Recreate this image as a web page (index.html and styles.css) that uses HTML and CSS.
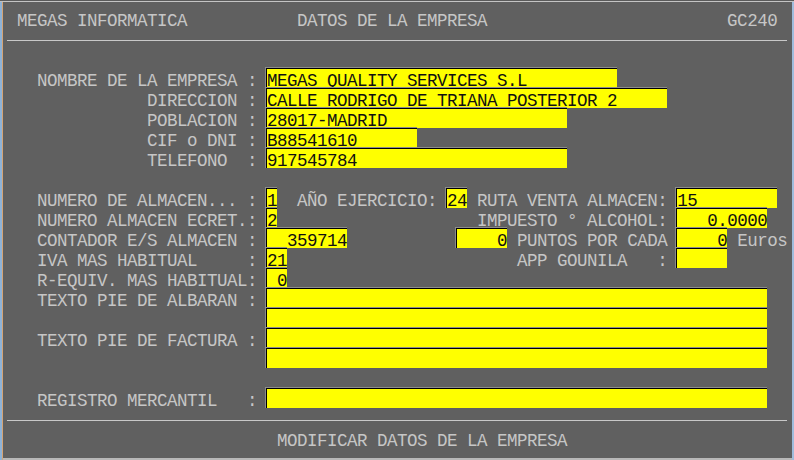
FILE: index.html
```html
<!DOCTYPE html>
<html>
<head>
<meta charset="utf-8">
<link rel="stylesheet" href="styles.css">
</head>
<body>
<div class="window">
<div class="screen">
<div class="line"> MEGAS INFORMATICA           DATOS DE LA EMPRESA                        GC240</div>
<div class="sep"></div>
<div class="line"> </div>
<div class="line">   NOMBRE DE LA EMPRESA : <span class="f">MEGAS QUALITY SERVICES S.L         </span></div>
<div class="line">              DIRECCION : <span class="f">CALLE RODRIGO DE TRIANA POSTERIOR 2     </span></div>
<div class="line">              POBLACION : <span class="f">28017-MADRID                  </span></div>
<div class="line">              CIF o DNI : <span class="f">B88541610      </span></div>
<div class="line">              TELEFONO  : <span class="f">917545784                     </span></div>
<div class="line"> </div>
<div class="line">   NUMERO DE ALMACEN... : <span class="f">1</span>  AÑO EJERCICIO: <span class="f">24</span> RUTA VENTA ALMACEN: <span class="f">15        </span></div>
<div class="line">   NUMERO ALMACEN ECRET.: <span class="f">2</span>                    IMPUESTO ° ALCOHOL: <span class="f">   0.0000</span></div>
<div class="line">   CONTADOR E/S ALMACEN : <span class="f">  359714</span>           <span class="f">    0</span> PUNTOS POR CADA <span class="f">    0</span> Euros</div>
<div class="line">   IVA MAS HABITUAL     : <span class="f">21</span>                       APP GOUNILA   : <span class="f">     </span></div>
<div class="line">   R-EQUIV. MAS HABITUAL: <span class="f"> 0</span></div>
<div class="line">   TEXTO PIE DE ALBARAN : <span class="f">                                                  </span></div>
<div class="line">                          <span class="f">                                                  </span></div>
<div class="line">   TEXTO PIE DE FACTURA : <span class="f">                                                  </span></div>
<div class="line">                          <span class="f">                                                  </span></div>
<div class="line"> </div>
<div class="line">   REGISTRO MERCANTIL   : <span class="f">                                                  </span></div>
<div class="sep"></div>
<div class="line">                           MODIFICAR DATOS DE LA EMPRESA</div>
</div>
</div>
</body>
</html>
```
FILE: styles.css
```css
html, body {
  margin: 0;
  padding: 0;
  background: #606060;
}
.window {
  width: 794px;
  height: 460px;
  box-sizing: border-box;
  background: #606060;
  box-shadow: inset 0 1px 0 #5a5a5a, inset 0 2px 0 #c4c4c4, inset 2px 0 0 #8fb2d6, inset 3px 0 0 #d4a476, inset -2px 0 0 #9fbcdc, inset 0 -2px 0 #b8b8b8;
  overflow: hidden;
}
.screen {
  padding: 8px 0 0 7px;
  font-family: "Liberation Mono", "Courier New", monospace;
  font-size: 17.5px;
  letter-spacing: -0.5px;
  color: #c6c6c6;
}
.line {
  height: 20px;
  line-height: 27px;
  white-space: pre;
}
.sep {
  width: 780px;
  height: 1px;
  background: #c8c8c8;
  margin: 12px 0 7px;
}
.f {
  display: inline-block;
  height: 20px;
  line-height: 27px;
  vertical-align: top;
  background: #ffff00;
  color: #111;
  box-shadow: inset 0 1px 0 #000, -1px 0 0 #000, 0 -1px 0 #8c8c8c, -2px 0 0 #8c8c8c, -2px -1px 0 #8c8c8c;
}
```
